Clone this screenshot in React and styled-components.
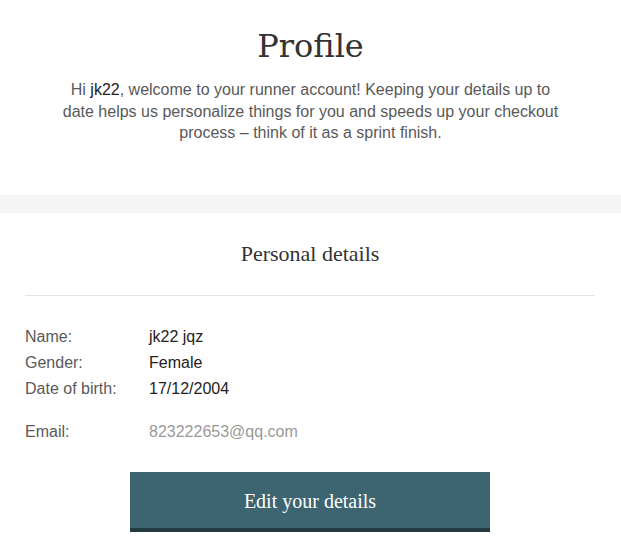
import React from 'react'
import styled, { createGlobalStyle } from 'styled-components'

const GlobalStyle = createGlobalStyle`
  body {
    margin: 0;
    background: #fff;
    font-family: "Liberation Sans", Arial, sans-serif;
    color: #555;
  }
`

const Intro = styled.header`
  display: flex;
  flex-direction: column;
  align-items: center;
  padding: 24px 20px 0;
  height: 195px;
  box-sizing: border-box;
`

const Title = styled.h1`
  margin: 0;
  font-family: "DejaVu Serif", "Liberation Serif", serif;
  font-weight: normal;
  font-size: 32px;
  line-height: 44px;
  color: #333;
`

const Lead = styled.p`
  margin: 11px 0 0;
  max-width: 510px;
  text-align: center;
  font-size: 16px;
  line-height: 21.5px;
  color: #595959;
`

const Name = styled.span`
  color: #222;
`

const Band = styled.div`
  height: 18px;
  background: #f5f5f5;
`

const Details = styled.section`
  padding: 0 26px 0 25px;
`

const SectionTitle = styled.h2`
  margin: 0;
  padding: 28px 0 28px;
  text-align: center;
  font-family: "Liberation Serif", "DejaVu Serif", serif;
  font-weight: normal;
  font-size: 22px;
  line-height: 26px;
  color: #333;
  border-bottom: 1px solid #e3e3e3;
`

const List = styled.dl`
  margin: 30px 0 0;
  display: grid;
  grid-template-columns: 124px 1fr;
  row-gap: 4px;
  font-size: 16px;
  line-height: 22px;
`

const Label = styled.dt`
  margin: ${(p) => (p.$spaced ? '17px 0 0' : '0')};
  color: #595959;
`

const Value = styled.dd`
  margin: ${(p) => (p.$spaced ? '17px 0 0' : '0')};
  color: ${(p) => (p.$muted ? '#999' : '#222')};
`

const Actions = styled.div`
  display: flex;
  justify-content: center;
  margin-top: 29px;
`

const EditButton = styled.button`
  width: 360px;
  height: 60px;
  border: 0;
  border-bottom: 4px solid #233a40;
  background: #3d6471;
  color: #fff;
  font-family: "Liberation Serif", "DejaVu Serif", serif;
  font-size: 20px;
  cursor: pointer;
  padding: 3px 0 0;
`

export default function App() {
  return (
    <>
      <GlobalStyle />
      <Intro>
        <Title>Profile</Title>
        <Lead>
          Hi <Name>jk22</Name>, welcome to your runner account! Keeping your
          details up to date helps us personalize things for you and speeds up
          your checkout process – think of it as a sprint finish.
        </Lead>
      </Intro>
      <Band />
      <Details>
        <SectionTitle>Personal details</SectionTitle>
        <List>
          <Label>Name:</Label>
          <Value>jk22 jqz</Value>
          <Label>Gender:</Label>
          <Value>Female</Value>
          <Label>Date of birth:</Label>
          <Value>17/12/2004</Value>
          <Label $spaced>Email:</Label>
          <Value $spaced $muted>823222653@qq.com</Value>
        </List>
        <Actions>
          <EditButton>Edit your details</EditButton>
        </Actions>
      </Details>
    </>
  )
}
